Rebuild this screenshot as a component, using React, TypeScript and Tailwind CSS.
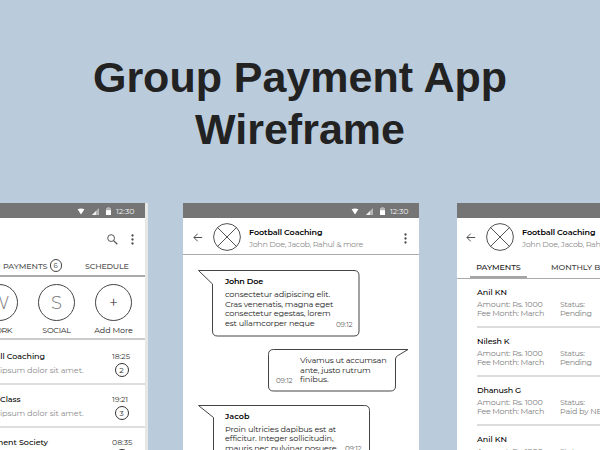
import { useLayoutEffect, useRef, type ReactNode } from "react";

/* A single line of text whose tracking is adjusted to fill a given width. */
function Line({ w, className = "", children }: { w: number; className?: string; children: string }) {
  const ref = useRef<HTMLSpanElement>(null);
  useLayoutEffect(() => {
    const fit = () => {
      const el = ref.current;
      if (!el) return;
      el.style.letterSpacing = "0px";
      const natural = el.getBoundingClientRect().width;
      el.style.letterSpacing = `${(w - natural) / children.length}px`;
    };
    fit();
    document.fonts?.ready.then(fit);
  }, [w, children]);
  return (
    <div className={`whitespace-nowrap ${className}`}>
      <span ref={ref}>{children}</span>
    </div>
  );
}

function StatusBar() {
  return (
    <div className="flex h-[15px] w-full shrink-0 items-center justify-end bg-[#757575] pr-[10.5px] pt-px text-white">
      <svg className="mr-[7px] h-[7px] w-[8px]" viewBox="0 0 8 7">
        <path d="M.6 1.3Q4-.4 7.4 1.3L4 6.5Z" fill="#fff" />
      </svg>
      <svg className="mr-[7px] h-[7px] w-[7px]" viewBox="0 0 7 7">
        <path d="M0 7 7 0V7Z" fill="#b5b5b5" />
        <path d="M0 7 4 3V7Z" fill="#eee" />
      </svg>
      <svg className="mr-[5px] h-[8px] w-[5px]" viewBox="0 0 5 8">
        <path d="M0 1H1.4V0H3.6V1H5V8H0Z" fill="#b4b4b4" />
        <path d="M0 3.2H5V8H0Z" fill="#fff" />
      </svg>
      <Line w={18.5} className="text-[7.8px] leading-[14px] text-[#f4f4f4]">12:30</Line>
    </div>
  );
}

function Dots() {
  return (
    <svg className="h-[11px] w-[3px] shrink-0" viewBox="0 0 3 11">
      <g fill="#4a4a4a">
        <circle cx="1.5" cy="1.5" r="1.15" />
        <circle cx="1.5" cy="5.5" r="1.15" />
        <circle cx="1.5" cy="9.5" r="1.15" />
      </g>
    </svg>
  );
}

function ChatHeader({ menu = false }: { menu?: boolean }) {
  return (
    <div className={`flex h-[36px] shrink-0 items-start ${menu ? "pl-[10px]" : "pl-[9px]"}`}>
      <svg className="mt-[15px] h-[9px] w-[10px] shrink-0" viewBox="0 0 10 9">
        <path d="M9.2 4.5H1M4.7.7.9 4.5 4.7 8.3" fill="none" stroke="#505050" strokeWidth="1" />
      </svg>
      <svg className="ml-[10px] mt-[5px] h-[28px] w-[28px] shrink-0" viewBox="0 0 28 28">
        <circle cx="14" cy="14" r="13.4" fill="none" stroke="#333" strokeWidth=".85" />
        <path d="M4.5 4.5 23.5 23.5M23.5 4.5 4.5 23.5" stroke="#333" strokeWidth=".85" />
      </svg>
      <div className={menu ? "ml-[8px] mt-[9px]" : "ml-[8px] mt-[9px]"}>
        <Line w={73.5} className="text-[8px] font-semibold leading-[11px] text-black">Football Coaching</Line>
        <Line w={114} className="text-[8px] leading-[12px] text-[#8c8c8c]">John Doe, Jacob, Rahul &amp; more</Line>
      </div>
      {menu && (
        <div className="ml-auto mr-[12px] mt-[15px] flex">
          <Dots />
        </div>
      )}
    </div>
  );
}

function Conversation({ title, tw, time, timeW, count, className }: { title: string; tw: number; time: string; timeW: number; count: string; className: string }) {
  return (
    <div className={`flex h-[43px] shrink-0 justify-between border-b-2 border-[#dedede] pl-[63px] ${className}`}>
      <div className="pt-[7.5px]">
        <Line w={tw} className="text-[8px] font-medium leading-[13px] text-black">{title}</Line>
        <Line w={111.5} className="mt-px text-[8.2px] leading-[13px] text-[#8c8c8c]">Lorem ipsum dolor sit amet.</Line>
      </div>
      <div className="w-[33px] pt-[7.5px]">
        <Line w={timeW} className="text-[7.8px] leading-[12px] text-[#333]">{time}</Line>
        <div className="ml-[2.5px] mt-[1.5px] flex h-[14px] w-[14px] items-center justify-center rounded-full border border-[#333] text-[8px] leading-none text-[#333]">
          {count}
        </div>
      </div>
    </div>
  );
}

function Category({ letter, label, w, className = "" }: { letter: string; label: string; w: number; className?: string }) {
  return (
    <div className="flex w-[57px] flex-col items-center">
      <div className={`flex h-[37px] w-[37px] items-center justify-center rounded-full border border-[#444] leading-none ${className}`}>
        {letter}
      </div>
      <Line w={w} className="mt-[3px] text-[8px] leading-[12px] text-[#222]">{label}</Line>
    </div>
  );
}

function GroupsPhone() {
  return (
    <div className="ml-[-91px] flex h-full w-[239px] shrink-0 flex-col border-r-[3px] border-[#e7e7e7] bg-white">
      <StatusBar />
      <div className="flex h-[38px] shrink-0 items-center justify-end pr-[11.5px] pt-[4px]">
        <svg className="mr-[13px] h-[11px] w-[11px]" viewBox="0 0 11 11" fill="none" stroke="#555">
          <circle cx="4.1" cy="4.1" r="3.4" strokeWidth="1" />
          <path d="M6.6 6.6 10.3 10.3" strokeWidth="1.3" />
        </svg>
        <Dots />
      </div>
      <div className="flex h-[21px] shrink-0 items-center border-b-2 border-[#aaa] pl-[94px]">
        <Line w={44.5} className="text-[8px] font-medium leading-[12px] text-[#555]">PAYMENTS</Line>
        <div className="ml-[2px] flex h-[12.5px] w-[12.5px] items-center justify-center rounded-full border border-[#444] text-[7px] leading-none text-[#444]">6</div>
        <Line w={43.5} className="ml-[23px] text-[8px] font-medium leading-[12px] text-[#555]">SCHEDULE</Line>
      </div>
      <div className="flex h-[63px] shrink-0 justify-end border-b-2 border-[#ccc] pr-[3px] pt-[7px]">
        <Category letter="W" label="WORK" w={25} className="text-[18px] font-light text-[#777]" />
        <Category letter="S" label="SOCIAL" w={28.5} className="text-[18px] font-light text-[#777]" />
        <Category letter="+" label="Add More" w={38.5} className="text-[16px] font-light text-[#222]" />
      </div>
      <Conversation title="Football Coaching" tw={73} time="18:25" timeW={18} count="2" className="mt-[2px]" />
      <Conversation title="Dance Class" tw={48.5} time="19:21" timeW={16} count="3" className="" />
      <Conversation title="Apartment Society" tw={76} time="08:35" timeW={20.5} count="1" className="" />
    </div>
  );
}

const copy = "text-[8.2px] leading-[9.7px] text-[#222]";
const stamp = "text-[7.2px] leading-[9px] text-[#666]";

function Outline({ className, viewBox, d }: { className: string; viewBox: string; d: string }) {
  return (
    <svg className={`absolute left-0 top-0 ${className}`} viewBox={viewBox}>
      <path d={d} fill="none" stroke="#444" strokeWidth="1" strokeLinejoin="round" />
    </svg>
  );
}

function ChatPhone() {
  return (
    <div className="ml-[35px] flex h-full w-[236px] shrink-0 flex-col bg-white">
      <StatusBar />
      <ChatHeader menu />
      <div className="h-px shrink-0 bg-[#aaa]" />
      <div className="relative ml-[15px] mt-[15px] h-[67px] w-[162px] shrink-0 pl-[27px] pt-[6px]">
        <Outline className="h-[67px] w-[162px]" viewBox="0 0 162 67" d="M.5.5H156Q161 .5 161 5.5V61Q161 66 156 66H19.5Q14.5 66 14.5 61V14Z" />
        <Line w={38} className="text-[8px] font-semibold leading-[11px] text-black">John Doe</Line>
        <div className="mt-[3px]">
          <Line w={105} className={copy}>consectetur adipiscing elit.</Line>
          <Line w={108} className={copy}>Cras venenatis, magna eget</Line>
          <Line w={105.5} className={copy}>consectetur egestas, lorem</Line>
          <div className="flex items-center">
            <Line w={89.5} className={copy}>est ullamcorper neque</Line>
            <Line w={16.5} className={`ml-[21.5px] pt-px ${stamp}`}>09:12</Line>
          </div>
        </div>
      </div>
      <div className="relative ml-[85px] mt-[12px] flex h-[43px] w-[141px] shrink-0 pl-[8px] pt-[7px]">
        <Outline className="h-[43px] w-[141px]" viewBox="0 0 141 43" d="M5.5.5H140L129.5 6.8Q127.5 8 127.5 10V37Q127.5 42 122.5 42H5.5Q.5 42 .5 37V5.5Q.5.5 5.5.5Z" />
        <Line w={16.5} className={`mt-[19.5px] ${stamp}`}>09:12</Line>
        <div className="ml-[7.5px]">
          <Line w={86.5} className={copy}>Vivamus ut accumsan</Line>
          <Line w={70.5} className={copy}>ante, justo rutrum</Line>
          <Line w={28.5} className={copy}>finibus.</Line>
        </div>
      </div>
      <div className="relative ml-[15px] mt-[13px] h-[67px] w-[172px] shrink-0 pl-[27px] pt-[5.5px]">
        <Outline className="h-[67px] w-[172px]" viewBox="0 0 172 67" d="M.5.5H166.5Q171.5.5 171.5 5.5V61Q171.5 66 166.5 66H20.5Q15.5 66 15.5 61V12.5Z" />
        <Line w={24.5} className="text-[8px] font-semibold leading-[11px] text-black">Jacob</Line>
        <div className="mt-[3px]">
          <Line w={111} className={copy}>Proin ultricies dapibus est at</Line>
          <Line w={108.5} className={copy}>efficitur. Integer sollicitudin,</Line>
          <div className="flex items-center">
            <Line w={111.5} className={copy}>mauris nec pulvinar posuere</Line>
            <Line w={16.5} className={`ml-[8.5px] ${stamp}`}>09:12</Line>
          </div>
        </div>
      </div>
    </div>
  );
}

function Payment({ name, w, status, sw }: { name: string; w: number; status: string; sw: number }) {
  const meta = "text-[8px] leading-[9px] text-[#808080]";
  return (
    <div className="ml-[20px] h-[49px] shrink-0 border-b-2 border-[#dcdcdc] pt-[7px]">
      <Line w={w} className="text-[8px] font-medium leading-[12px] text-black">{name}</Line>
      <div className="mt-[1.5px] flex">
        <div className="w-[83px]">
          <Line w={65.5} className={meta}>Amount: Rs. 1000</Line>
          <Line w={67} className={meta}>Fee Month: March</Line>
        </div>
        <div>
          <Line w={24.5} className={meta}>Status:</Line>
          <Line w={sw} className={meta}>{status}</Line>
        </div>
      </div>
    </div>
  );
}

function PaymentsPhone() {
  return (
    <div className="ml-[38px] flex h-full w-[236px] shrink-0 flex-col bg-white">
      <StatusBar />
      <ChatHeader />
      <div className="flex h-[25px] shrink-0 border-b border-[#aaa] pl-[13px]">
        <div className="flex w-[57px] flex-col items-center justify-between">
          <Line w={44.5} className="pt-[7px] text-[8px] font-medium leading-[13px] text-[#222]">PAYMENTS</Line>
          <div className="h-[2px] w-full bg-[#a5a5a5]" />
        </div>
        <Line w={66} className="ml-[24px] pt-[7px] text-[8px] font-medium leading-[13px] text-[#444]">MONTHLY BILLS</Line>
      </div>
      <Payment name="Anil KN" w={30} status="Pending" sw={31.5} />
      <Payment name="Nilesh K" w={32.5} status="Pending" sw={31.5} />
      <Payment name="Dhanush G" w={44} status="Paid by NEFT" sw={51} />
      <Payment name="Anil KN" w={30} status="Pending" sw={31.5} />
    </div>
  );
}

function Stage({ children }: { children: ReactNode }) {
  return <div className="flex h-[247px] w-[600px] overflow-hidden">{children}</div>;
}

export default function App() {
  return (
    <main className="h-[450px] w-[600px] overflow-hidden bg-[#bacbdc] font-['Montserrat','Inter',sans-serif]">
      <h1 className="h-[203px] pt-[51px] text-center font-['Liberation_Sans',Arial,sans-serif] text-[43px] font-bold leading-[52px] text-[#222]">
        Group Payment App
        <br />
        Wireframe
      </h1>
      <Stage>
        <GroupsPhone />
        <ChatPhone />
        <PaymentsPhone />
      </Stage>
    </main>
  );
}
